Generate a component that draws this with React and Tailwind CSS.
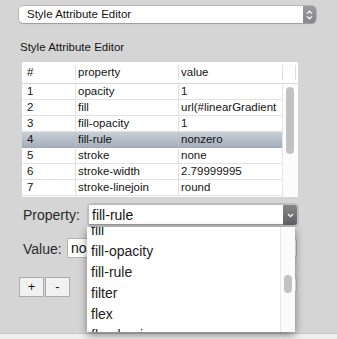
export default function App() {
  const rows = [
    ["1", "opacity", "1"],
    ["2", "fill", "url(#linearGradient"],
    ["3", "fill-opacity", "1"],
    ["4", "fill-rule", "nonzero"],
    ["5", "stroke", "none"],
    ["6", "stroke-width", "2.79999995"],
    ["7", "stroke-linejoin", "round"],
  ];
  const items = ["fill", "fill-opacity", "fill-rule", "filter", "flex", "flex-basis"];
  return (
    <div className="relative w-[337px] h-[339px] overflow-hidden bg-[#d5d5d5] flex flex-col text-[#141414] font-['Liberation_Sans',Arial,sans-serif]">
      {/* top popup */}
      <div className="mt-[6px] ml-[19px] w-[297px] h-[17px] flex rounded-[4px] bg-white shadow-[0_0_0_0.5px_rgba(0,0,0,0.28),0_1px_1px_rgba(0,0,0,0.15)]">
        <div className="flex-1 pl-[8px] text-[11.5px] leading-[17px]">Style Attribute Editor</div>
        <div className="w-[13px] h-[17px] rounded-r-[4px] bg-gradient-to-b from-[#9a9a9f] to-[#86868b] flex items-center justify-center">
          <svg width="7" height="10" viewBox="0 0 7 10">
            <path d="M1 3.6 L3.5 1.2 L6 3.6" fill="none" stroke="white" strokeWidth="1.2" />
            <path d="M1 6.4 L3.5 8.8 L6 6.4" fill="none" stroke="white" strokeWidth="1.2" />
          </svg>
        </div>
      </div>

      {/* label */}
      <div className="mt-[17px] ml-[20px] text-[11.5px] leading-[14px]">Style Attribute Editor</div>

      {/* table */}
      <div className="mt-[8px] ml-[22px] w-[276px] h-[135px] bg-white flex flex-col text-[11.5px]">
        <div className="flex items-center h-[22px] border-b border-[#d6d6d6] shrink-0">
          <div className="w-[53px] pl-[5px]">#</div>
          <div className="w-px h-[15px] bg-[#dedede]" />
          <div className="w-[102px] pl-[2px]">property</div>
          <div className="w-px h-[15px] bg-[#dedede]" />
          <div className="w-[103px] pl-[2px]">value</div>
          <div className="w-px h-[15px] bg-[#dedede]" />
          <div className="w-[12px]" />
          <div className="w-px h-[15px] bg-[#dedede]" />
        </div>
        <div className="flex flex-1">
          <div className="w-[260px] flex flex-col">
            {rows.map((r, i) => (
              <div
                key={r[0]}
                className={
                  "flex h-[16px] leading-[15px] border-b " +
                  (i === 3
                    ? "bg-gradient-to-b from-[#c8cfd7] to-[#a5afbb] border-[#a0a9b4]"
                    : "border-[#e2e2e2]")
                }
              >
                <div className={"w-[54px] pl-[5px] border-r " + (i === 3 ? "border-[#b9c1ca]" : "border-[#e2e2e2]")}>{r[0]}</div>
                <div className={"w-[103px] pl-[2px] border-r " + (i === 3 ? "border-[#b9c1ca]" : "border-[#e2e2e2]")}>{r[1]}</div>
                <div className="flex-1 pl-[2px] overflow-hidden whitespace-nowrap">{r[2]}</div>
              </div>
            ))}
          </div>
          <div className="w-[16px] border-l border-[#e6e6e6] bg-[#fcfcfc]">
            <div className="mt-[3px] ml-[3px] w-[8px] h-[67px] rounded-full bg-[#c2c2c2]" />
          </div>
        </div>
      </div>

      {/* Property row */}
      <div className="mt-[6px] ml-[23px] flex items-center h-[24px]">
        <div className="w-[64px] text-[14px] text-[#2a2a2a]">Property:</div>
        <div className="w-[212px] h-[24px] rounded-[5px] bg-[#bcbcbc] p-[2px] flex">
          <div className="flex-1 bg-white pl-[3px] text-[14px] leading-[20px] border-b border-[#9a9a9a]">fill-rule</div>
          <div className="w-[14px] rounded-r-[3px] bg-gradient-to-b from-[#85858a] to-[#5f5f64] flex items-center justify-center">
            <svg width="7" height="5" viewBox="0 0 7 5">
              <path d="M1 1 L3.5 3.6 L6 1" fill="none" stroke="white" strokeWidth="1.3" />
            </svg>
          </div>
        </div>
      </div>

      {/* Value row */}
      <div className="mt-[11px] ml-[23px] flex items-center h-[20px]">
        <div className="w-[44px] text-[14px] text-[#2a2a2a] mt-[3px]">Value:</div>
        <div className="w-[230px] h-[20px] bg-white border border-[#b3b3b3] rounded-r-[3px] pl-[3px] text-[14px] leading-[18px]">none</div>
      </div>

      {/* Buttons row */}
      <div className="mt-[19px] pl-[19px] pr-[40px] flex items-start">
        <div className="w-[25px] h-[20px] bg-[#f1f1f1] border border-[#ababab] text-[13px] leading-[18px] text-center">+</div>
        <div className="ml-[1px] w-[25px] h-[20px] bg-[#f1f1f1] border border-[#ababab] text-[13px] leading-[18px] text-center">-</div>
        <div className="ml-auto w-[30px] h-[16px] bg-white border border-[#c4c4c4] rounded-[3px]" />
      </div>

      <div className="flex-1" />
      <div className="h-[6px] bg-[#efefef] border-t border-[#c9c9c9]" />

      {/* dropdown list overlay */}
      <div className="absolute left-[87px] top-[227px] w-[208px] h-[105px] bg-white shadow-[0_3px_8px_rgba(0,0,0,0.45)] overflow-hidden flex">
        <div className="flex-1 flex flex-col -mt-[7px]">
          {items.map((t) => (
            <div key={t} className="h-[21px] leading-[21px] pl-[4px] text-[14px] text-[#222] shrink-0">{t}</div>
          ))}
        </div>
        <div className="w-[15px] border-l border-[#e9e9e9] bg-[#fbfbfb]">
          <div className="mt-[48px] ml-[3px] w-[8px] h-[18px] rounded-full bg-[#c2c2c2]" />
        </div>
      </div>
    </div>
  );
}
